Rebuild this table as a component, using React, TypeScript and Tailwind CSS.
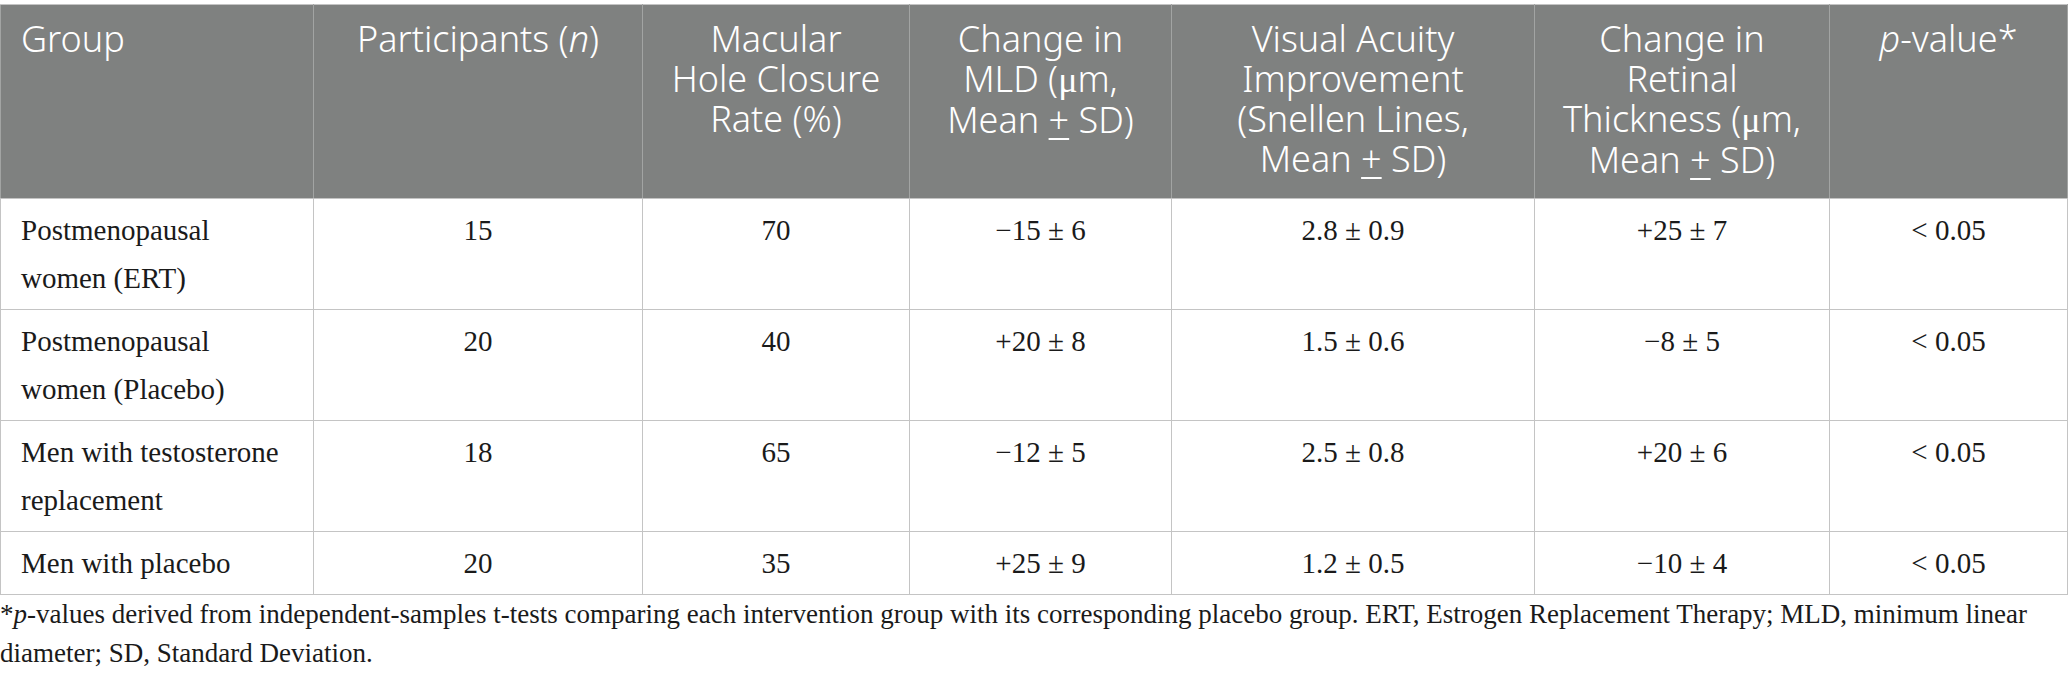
import React from "react";

const PM = () => <span className="underline underline-offset-[5px] decoration-[2px]">+</span>;
const Mu = () => <span className="font-['Liberation_Serif',serif]">μ</span>;

const rows: [React.ReactNode, string, string, string, string, string, string][] = [
  [<>Postmenopausal<br />women (ERT)</>, "15", "70", "−15 ± 6", "2.8 ± 0.9", "+25 ± 7", "< 0.05"],
  [<>Postmenopausal<br />women (Placebo)</>, "20", "40", "+20 ± 8", "1.5 ± 0.6", "−8 ± 5", "< 0.05"],
  [<>Men with testosterone<br />replacement</>, "18", "65", "−12 ± 5", "2.5 ± 0.8", "+20 ± 6", "< 0.05"],
  ["Men with placebo", "20", "35", "+25 ± 9", "1.2 ± 0.5", "−10 ± 4", "< 0.05"],
];

export default function App() {
  const th =
    "bg-[#7f8180] border border-y-[#c4c4c4] border-x-[#a2a4a3] px-[20px] pt-[14px] pb-[18px] align-top font-light text-white text-[36px] leading-[40px] whitespace-nowrap";
  const td =
    "border border-[#c4c4c4] px-[20px] pt-[7px] pb-[7px] align-top text-[29px] leading-[48px] text-[#1a1a1a]";
  return (
    <div className="w-[2068px] h-[684px] bg-white pt-[4px] overflow-hidden">
      <table className="table-fixed border-collapse w-[2067px] font-['Liberation_Serif',serif]">
        <colgroup>
          <col className="w-[313px]" />
          <col className="w-[329px]" />
          <col className="w-[267px]" />
          <col className="w-[262px]" />
          <col className="w-[363px]" />
          <col className="w-[295px]" />
          <col className="w-[238px]" />
        </colgroup>
        <thead className="font-['Noto_Sans','Open_Sans',sans-serif]">
          <tr>
            <th className={th + " text-left"}>Group</th>
            <th className={th + " text-center"}>
              Participants (<i>n</i>)
            </th>
            <th className={th + " text-center"}>
              Macular
              <br />
              Hole Closure
              <br />
              Rate (%)
            </th>
            <th className={th + " text-center"}>
              Change in
              <br />
              MLD (<Mu />m,
              <br />
              Mean <PM /> SD)
            </th>
            <th className={th + " text-center"}>
              Visual Acuity
              <br />
              Improvement
              <br />
              (Snellen Lines,
              <br />
              Mean <PM /> SD)
            </th>
            <th className={th + " text-center"}>
              Change in
              <br />
              Retinal
              <br />
              Thickness (<Mu />m,
              <br />
              Mean <PM /> SD)
            </th>
            <th className={th + " text-center"}>
              <i>p</i>-value*
            </th>
          </tr>
        </thead>
        <tbody>
          {rows.map((r, i) => (
            <tr key={i}>
              {r.map((c, j) => (
                <td key={j} className={td + (j === 0 ? " text-left" : " text-center")}>
                  {c}
                </td>
              ))}
            </tr>
          ))}
        </tbody>
      </table>
      <div className="font-['Liberation_Serif',serif] text-[27px] leading-[39px] text-[#1a1a1a]">
        <div className="whitespace-nowrap">
          *<i>p</i>-values derived from independent-samples t-tests comparing each intervention group with its
          corresponding placebo group. ERT, Estrogen Replacement Therapy; MLD, minimum linear
        </div>
        <div className="whitespace-nowrap">diameter; SD, Standard Deviation.</div>
      </div>
    </div>
  );
}
